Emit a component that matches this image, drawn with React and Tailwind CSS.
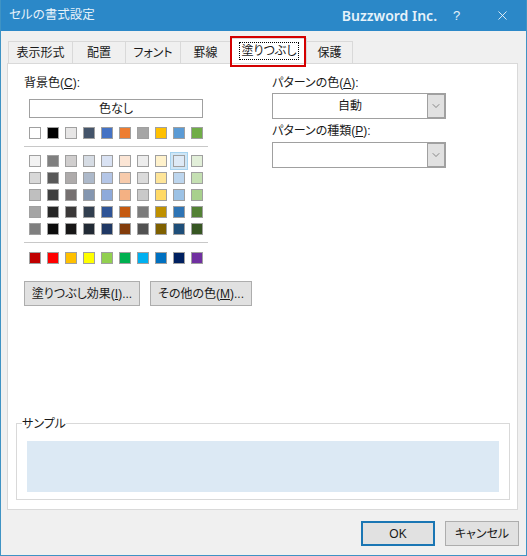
import { ChevronDown, X } from 'lucide-react';

const themeColors = ['#ffffff', '#000000', '#e7e6e6', '#44546a', '#4472c4', '#ed7d31', '#a5a5a5', '#ffc000', '#5b9bd5', '#70ad47'];
const tints = [
  ['#f2f2f2', '#7f7f7f', '#d0cece', '#d6dce4', '#d9e2f3', '#fbe5d5', '#ededed', '#fff2cc', '#deeaf6', '#e2efd9'],
  ['#d8d8d8', '#595959', '#aeabab', '#adb9ca', '#b4c6e7', '#f7cbac', '#dbdbdb', '#fee599', '#bdd6ee', '#c5e0b3'],
  ['#bfbfbf', '#3f3f3f', '#757070', '#8496b0', '#8eaadb', '#f4b183', '#c9c9c9', '#ffd965', '#9cc2e5', '#a8d08d'],
  ['#a5a5a5', '#262626', '#3a3838', '#323f4f', '#2f5496', '#c55a11', '#7b7b7b', '#bf9000', '#2e74b5', '#538135'],
  ['#7f7f7f', '#0c0c0c', '#171616', '#222a35', '#1f3864', '#833c0b', '#525252', '#7f6000', '#1e4e79', '#375623'],
];
const standardColors = ['#c00000', '#ff0000', '#ffc000', '#ffff00', '#92d050', '#00b050', '#00b0f0', '#0070c0', '#002060', '#7030a0'];

const Swatch = ({ color, selected }) => (
  <div
    className={`w-3 h-3 border border-[#a0a0a0] ${selected ? 'shadow-[0_0_0_2px_#cfe6f6,0_0_0_3px_#a6d3ef]' : ''}`}
    style={{ backgroundColor: color }}
  />
);

const SwatchRow = ({ colors, selected }) => (
  <div className="flex gap-[6px] pl-[5px]">
    {colors.map((c, i) => <Swatch key={i} color={c} selected={selected === i} />)}
  </div>
);

const Tab = ({ label, w }) => (
  <div className={`${w} h-[22px] border border-b-0 border-l-0 first:border-l border-[#d9d9d9] bg-[#f0f0f0] flex items-center justify-center`}>
    {label}
  </div>
);

const Combo = ({ value }) => (
  <div className="w-[174px] h-[26px] border border-[#a0a0a0] bg-white flex">
    <div className="flex-1 flex items-center justify-center">{value}</div>
    <div className="w-[18px] bg-[#e1e1e1] border border-[#a0a0a0] flex items-center justify-center">
      <ChevronDown size={12} strokeWidth={1.3} className="text-[#555]" />
    </div>
  </div>
);

const SmallButton = ({ children, w }) => (
  <div className={`${w} h-[25px] border border-[#adadad] bg-[#e1e1e1] flex items-center justify-center`}>{children}</div>
);

export default function App() {
  return (
    <div className="w-[527px] h-[556px] flex flex-col bg-[#f0f0f0] border-x border-b border-[#3f93c4] text-[12px] text-[#1a1a1a] font-['Liberation_Sans','Noto_Sans_CJK_JP',sans-serif] [font-feature-settings:'palt'] overflow-hidden">
      {/* title bar */}
      <div className="h-[31px] -mx-px bg-[#2b88c8] text-[#e6f2fa] flex items-center pl-[9px] shrink-0">
        <span className="text-[12.5px]">セルの書式設定</span>
        <span className="ml-auto text-[14px] font-semibold font-['Noto_Sans',sans-serif]">Buzzword Inc.</span>
        <span className="ml-[16px] w-[9px] text-[13px]">?</span>
        <X size={15} strokeWidth={1.3} className="ml-[33px] mr-[17px] text-white" />
      </div>

      {/* tabs */}
      <div className="relative flex pl-[7px] pt-[10px] shrink-0 z-10">
        <Tab label="表示形式" w="w-[65px]" />
        <Tab label="配置" w="w-[53px]" />
        <Tab label="フォント" w="w-[55px]" />
        <Tab label="罫線" w="w-[50px]" />
        <div className="w-[76px] h-[25px] -mt-[3px] -mb-px bg-white border border-b-0 border-[#d9d9d9] flex items-center justify-center relative">
          <span className="border border-dotted border-black w-[60px] h-[18px] flex items-center justify-center">塗りつぶし</span>
        </div>
        <Tab label="保護" w="w-[46px]" />
        <div className="absolute left-[229px] top-[5px] w-[76px] h-[31px] border-2 border-[#d40000]" />
      </div>

      {/* panel */}
      <div className="mx-[6px] w-[511px] h-[447px] bg-white border border-[#d9d9d9] flex flex-col pl-[8px] pr-[7px] shrink-0">
        <div className="flex pt-[11px]">
          <div className="w-[256px] pl-[8px]">
            <div className="h-[16px] leading-[16px]">背景色(<u>C</u>):</div>
            <div className="mt-[8px] w-[174px] ml-[5px] h-[19px] border border-[#a0a0a0] flex items-center justify-center">色なし</div>
            <div className="mt-[9px]"><SwatchRow colors={themeColors} /></div>
            <div className="mt-[7px] w-[184px] border-t border-[#c8c8c8]" />
            <div className="mt-[8px] flex flex-col gap-[5px]">
              {tints.map((row, i) => <SwatchRow key={i} colors={row} selected={i === 0 ? 8 : undefined} />)}
            </div>
            <div className="mt-[7px] w-[184px] border-t border-[#c8c8c8]" />
            <div className="mt-[9px]"><SwatchRow colors={standardColors} /></div>
            <div className="mt-[17px] flex gap-[10px]">
              <SmallButton w="w-[116px]">塗りつぶし効果(<u>I</u>)...</SmallButton>
              <SmallButton w="w-[102px]">その他の色(<u>M</u>)...</SmallButton>
            </div>
          </div>
          <div className="flex flex-col">
            <div className="h-[16px] leading-[16px]">パターンの色(<u>A</u>):</div>
            <div className="mt-[2px]"><Combo value="自動" /></div>
            <div className="mt-[4px] h-[16px] leading-[16px]">パターンの種類(<u>P</u>):</div>
            <div className="mt-[3px]"><Combo value="" /></div>
          </div>
        </div>

        <fieldset className="mt-auto mb-[9px] h-[85px] border border-[#d9d9d9] px-[10px]">
          <legend className="-ml-[5px] leading-[16px] translate-y-px">サンプル</legend>
          <div className="mt-[10px] h-[51px] bg-[#dce9f4]" />
        </fieldset>
      </div>

      {/* footer */}
      <div className="flex justify-end gap-[10px] pr-[7px] pt-[11px]">
        <div className="w-[74px] h-[25px] border-2 border-[#1a76b4] bg-[#e1e1e1] flex items-center justify-center">OK</div>
        <div className="w-[74px] h-[25px] border border-[#adadad] bg-[#e1e1e1] flex items-center justify-center">キャンセル</div>
      </div>
    </div>
  );
}
